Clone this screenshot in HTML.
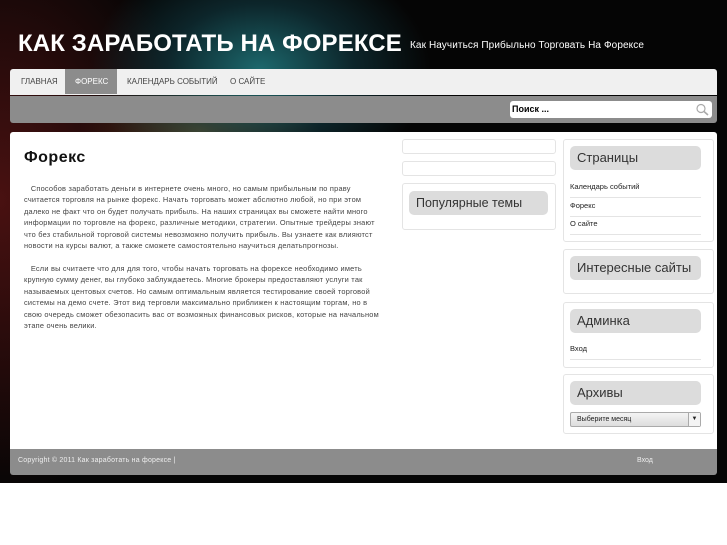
<!DOCTYPE html>
<html><head><meta charset="utf-8"><style>
*{margin:0;padding:0;box-sizing:border-box}
body{width:727px;height:545px;overflow:hidden;background:#fff;font-family:"Liberation Sans","DejaVu Sans",sans-serif;position:relative}
#bg{position:absolute;left:0;top:0;width:727px;height:483px;background:
radial-gradient(ellipse 170px 120px at 260px 70px,rgba(30,110,115,.95),rgba(20,70,80,.5) 55%,rgba(0,0,0,0) 100%),
radial-gradient(ellipse 200px 300px at 0px 200px,rgba(90,20,20,.8),rgba(0,0,0,0) 100%),
radial-gradient(ellipse 120px 60px at 200px 130px,rgba(120,90,40,.7),rgba(0,0,0,0) 100%),
#050505}
.abs{position:absolute}
h1{position:absolute;left:18px;top:30px;color:#fff;font-size:24px;letter-spacing:0.12px;font-weight:bold;white-space:nowrap}
.tag{left:410px;top:40px;color:#fff;font-size:10px;letter-spacing:0.1px}
#nav{left:10px;top:69px;width:707px;height:26px;background:#f0f0f0;border-radius:3px 3px 0 0}
#nav span{position:absolute;top:8px;font-size:8px;color:#444}
#act{left:65px;top:69px;width:52px;height:25px;background:#8c8c8c}
#bar{left:10px;top:96px;width:707px;height:27px;background:#8c8c8c;border-radius:0 0 3px 3px}
#search{left:510px;top:101px;width:202px;height:17px;background:#fff;border-radius:3px;font-size:9px;font-weight:bold;padding:3px 2px;color:#000}
#main{left:10px;top:132px;width:707px;height:317px;background:#fff;border-radius:3px 3px 0 0}
h2{position:absolute;left:24px;top:149px;font-size:16px;letter-spacing:0.5px;font-weight:bold;color:#111}
.p{position:absolute;left:24px;white-space:nowrap;font-size:7.4px;letter-spacing:0.22px;line-height:11.4px;color:#444}
.box{position:absolute;border:1px solid #e4e4e4;border-radius:3px;background:#fff}
.wt{position:absolute;background:#dcdcdc;border-radius:5px;font-size:13px;color:#333;padding-left:7px;line-height:24px}
.li{position:absolute;left:570px;width:131px;font-size:7.5px;color:#222;border-bottom:1px solid #e4e4e4;height:18px;line-height:14px}
#foot{left:10px;top:449px;width:707px;height:26px;background:#8c8c8c;border-radius:0 0 3px 3px}
</style></head><body>
<div id="bg"></div>
<h1>КАК ЗАРАБОТАТЬ НА ФОРЕКСЕ</h1>
<div class="abs tag">Как Научиться Прибыльно Торговать На Форексе</div>
<div class="abs" id="nav"><span style="left:11px">ГЛАВНАЯ</span><span style="left:117px">КАЛЕНДАРЬ СОБЫТИЙ</span><span style="left:220px">О САЙТЕ</span></div>
<div class="abs" id="act"><span style="position:absolute;left:10px;top:8px;font-size:8px;color:#fff">ФОРЕКС</span></div>
<div class="abs" id="bar"></div>
<div class="abs" id="search">Поиск ...<svg style="position:absolute;right:3px;top:2px" width="14" height="13"><circle cx="6" cy="5.5" r="4" fill="none" stroke="#aaa" stroke-width="1.2"/><line x1="9" y1="8.5" x2="13" y2="12" stroke="#aaa" stroke-width="1.6"/></svg></div>
<div class="abs" id="main"></div>
<h2>Форекс</h2>
<div class="p" style="top:183px">&nbsp;&nbsp;&nbsp;Способов заработать деньги в интернете очень много, но самым прибыльным по праву<br>считается торговля на рынке форекс. Начать торговать может абслютно любой, но при этом<br>далеко не факт что он будет получать прибыль. На наших страницах вы сможете найти много<br>информации по торговле на форекс, различные методики, стратегии. Опытные трейдеры знают<br>что без стабильной торговой системы невозможно получить прибыль. Вы узнаете как влияютст<br>новости на курсы валют, а также сможете самостоятельно научиться делатьпрогнозы.</div>
<div class="p" style="top:263px">&nbsp;&nbsp;&nbsp;Если вы считаете что для для того, чтобы начать торговать на форексе необходимо иметь<br>крупную сумму денег, вы глубоко заблуждаетесь. Многие брокеры предоставляют услуги так<br>называемых центовых счетов. Но самым оптимальным является тестирование своей торговой<br>системы на демо счете. Этот вид терговли максимально приближен к настоящим торгам, но в<br>свою очередь сможет обезопасить вас от возможных финансовых рисков, которые на начальном<br>этапе очень велики.</div>
<div class="box" style="left:402px;top:139px;width:154px;height:15px"></div>
<div class="box" style="left:402px;top:161px;width:154px;height:15px"></div>
<div class="box" style="left:402px;top:183px;width:154px;height:47px"></div>
<div class="wt" style="left:409px;top:191px;width:139px;height:24px;font-size:12.5px">Популярные темы</div>
<div class="box" style="left:563px;top:139px;width:151px;height:103px"></div>
<div class="wt" style="left:570px;top:146px;width:131px">Страницы</div>
<div class="li" style="top:180px">Календарь событий</div>
<div class="li" style="top:199px">Форекс</div>
<div class="li" style="top:217px">О сайте</div>
<div class="box" style="left:563px;top:249px;width:151px;height:45px"></div>
<div class="wt" style="left:570px;top:256px;width:131px">Интересные сайты</div>
<div class="box" style="left:563px;top:302px;width:151px;height:66px"></div>
<div class="wt" style="left:570px;top:309px;width:131px">Админка</div>
<div class="li" style="top:342px">Вход</div>
<div class="box" style="left:563px;top:374px;width:151px;height:60px"></div>
<div class="wt" style="left:570px;top:381px;width:131px">Архивы</div>
<div class="abs" style="left:570px;top:412px;width:131px;height:15px;border:1px solid #aaa;border-radius:2px;background:linear-gradient(#f4f4f4,#ddd);font-size:7px;line-height:13px;padding-left:6px;color:#222">Выберите месяц<div style="position:absolute;right:0;top:0;width:12px;height:13px;border-left:1px solid #aaa;background:#f4f4f4;text-align:center;font-size:6px">▼</div></div>
<div class="abs" id="foot"><span style="position:absolute;left:8px;top:8px;font-size:7px;letter-spacing:0.2px;color:#eee">Copyright © 2011 Как заработать на форексе |</span><span style="position:absolute;left:627px;top:8px;font-size:7px;color:#eee">Вход</span></div>
</body></html>
